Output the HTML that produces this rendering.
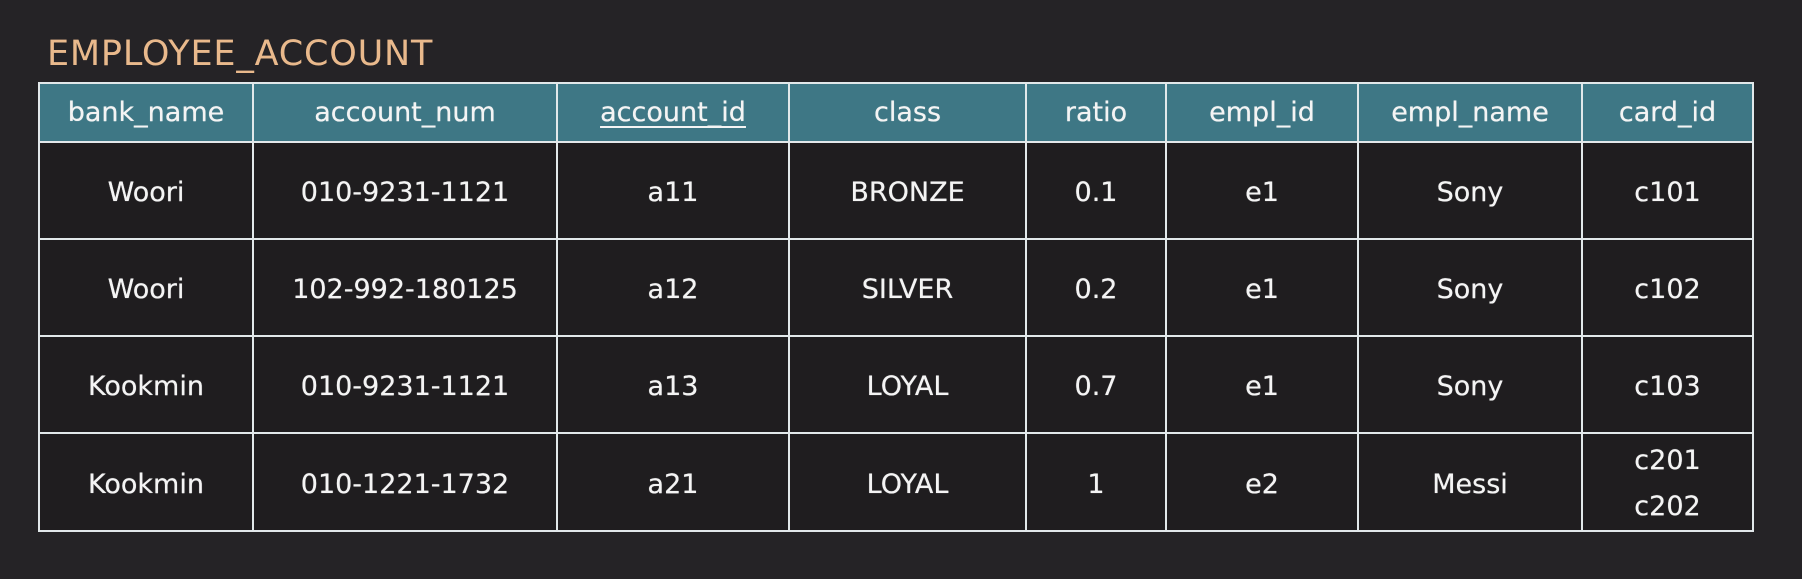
<!DOCTYPE html>
<html><head><meta charset="utf-8"><style>
html,body{margin:0;padding:0;width:1802px;height:579px;background:#252326;overflow:hidden;}
.t{position:absolute;left:47px;top:34px;font-family:"DejaVu Sans","Liberation Sans",sans-serif;font-size:35px;color:#e9b98c;letter-spacing:0.8px;}
table{position:absolute;left:38px;top:82px;border-collapse:collapse;table-layout:fixed;font-family:"DejaVu Sans","Liberation Sans",sans-serif;font-size:27px;color:#f4f4f4;}
td,th{border:2px solid #e2e8ea;text-align:center;padding:0;font-weight:normal;background:#1f1d1f;text-shadow:0 0 0.6px #fff;}
th{background:#3e7785;height:57px;}
td{height:91px;padding-top:4px;}
u{text-decoration-thickness:2px;text-underline-offset:5px;}
</style></head><body>
<div class="t">EMPLOYEE_ACCOUNT</div>
<table>
<colgroup><col style="width:214px"><col style="width:304px"><col style="width:232px"><col style="width:237px"><col style="width:140px"><col style="width:192px"><col style="width:224px"><col style="width:171px"></colgroup>
<tr><th>bank_name</th><th>account_num</th><th><u>account_id</u></th><th>class</th><th>ratio</th><th>empl_id</th><th>empl_name</th><th>card_id</th></tr>
<tr><td>Woori</td><td>010-9231-1121</td><td>a11</td><td>BRONZE</td><td>0.1</td><td>e1</td><td>Sony</td><td>c101</td></tr>
<tr><td>Woori</td><td>102-992-180125</td><td>a12</td><td>SILVER</td><td>0.2</td><td>e1</td><td>Sony</td><td>c102</td></tr>
<tr><td>Kookmin</td><td>010-9231-1121</td><td>a13</td><td>LOYAL</td><td>0.7</td><td>e1</td><td>Sony</td><td>c103</td></tr>
<tr><td>Kookmin</td><td>010-1221-1732</td><td>a21</td><td>LOYAL</td><td>1</td><td>e2</td><td>Messi</td><td style="line-height:46px">c201<br>c202</td></tr>
</table>
</body></html>
